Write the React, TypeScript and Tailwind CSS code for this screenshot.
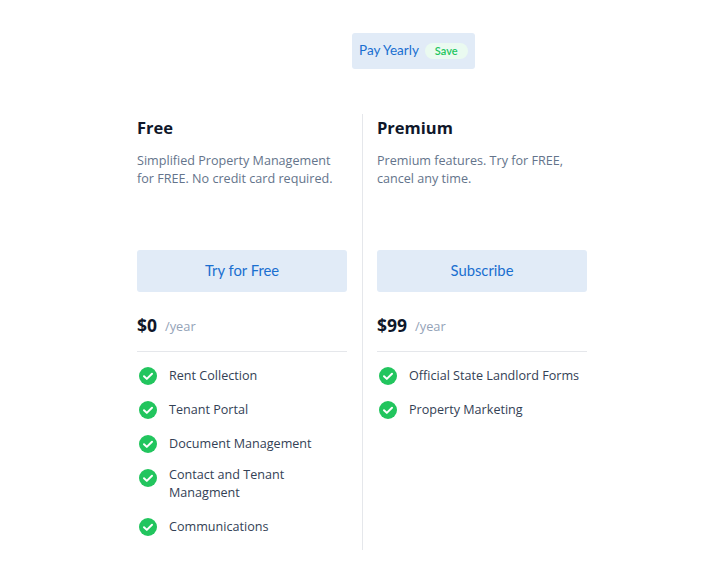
import React from 'react';

const freeFeatures = ['Rent Collection', 'Tenant Portal', 'Document Management', 'Contact and Tenant Managment', 'Communications'];
const premiumFeatures = ['Official State Landlord Forms', 'Property Marketing'];

const CheckIcon = ({ wrapped }: { wrapped: boolean }) => (
  <svg viewBox="0 0 18 18" className={wrapped ? 'mt-[3px] ml-[2px] h-[18px] w-[18px] shrink-0' : 'ml-[2px] h-[18px] w-[18px] shrink-0'} fill="none">
    <circle cx="9" cy="9" r="9" fill="#22c55e" />
    <path d="M5 9.2l2.8 2.7 5.2-5.2" stroke="#fff" strokeWidth="2" strokeLinecap="round" strokeLinejoin="round" />
  </svg>
);

const PlanColumn = ({ name, desc, cta, price, features, className }: { name: string; desc: string[]; cta: string; price: string; features: string[]; className: string }) => (
  <div className={className}>
    <h3 className="text-[16.5px] leading-[27px] font-bold text-[#0f172a]">{name}</h3>
    <p className="mt-[11px] h-[89px] text-[12.6px] leading-[18px] text-[#64748b]">
      {desc[0]}
      <br />
      {desc[1]}
    </p>
    <button className="mt-[9px] block h-[42px] w-[210px] rounded-[3px] bg-[#e1ebf7] pb-[2px] font-['Lato',sans-serif] text-[14.8px] font-normal text-[#1a6fd0]">{cta}</button>
    <div className="mt-[19px] flex items-center">
      <span className="text-[17.5px] leading-[28px] font-bold text-[#0f172a]">{price}</span>
      <span className="mt-[2px] ml-[8px] text-[12.8px] leading-[18px] font-medium text-[#94a3b8]">/year</span>
    </div>
    <div className="mt-[12px] w-[210px] border-t border-[#e5e7eb]" />
    <ul className="mt-[15px] flex w-[210px] flex-col gap-[16px]">
      {features.map((f) => {
        const wrapped = f === 'Contact and Tenant Managment';
        return (
          <li key={f} className={wrapped ? '-mt-[3px] flex items-start' : 'flex items-start'}>
            <CheckIcon wrapped={wrapped} />
            <span className="ml-[12px] text-[12.6px] leading-[18px] text-[#334155]">{f}</span>
          </li>
        );
      })}
    </ul>
  </div>
);

export default function App() {
  return (
    <div className="h-[578px] w-[702px] overflow-hidden bg-white font-['Open_Sans',sans-serif]">
      <div className="flex justify-center pt-[33px] pl-[125px]">
        <div className="flex h-[36px] w-[123px] items-center rounded-[3px] bg-[#e1ebf7] pl-[7px]">
          <span className="pb-[2px] font-['Lato',sans-serif] text-[13.5px] font-normal text-[#1a6fd0]">Pay Yearly</span>
          <span className="ml-[6px] rounded-full bg-[#eafaf0] px-[10px] font-['Lato',sans-serif] text-[11px] leading-[16px] font-semibold text-[#22c55e]">Save</span>
        </div>
      </div>
      <div className="mt-[45px] flex pl-[137px]">
        <PlanColumn
          className="h-[436px] w-[226px] border-r border-[#e5e7eb]"
          name="Free"
          desc={['Simplified Property Management', 'for FREE. No credit card required.']}
          cta="Try for Free"
          price="$0"
          features={freeFeatures}
        />
        <PlanColumn
          className="ml-[14px] w-[226px]"
          name="Premium"
          desc={['Premium features. Try for FREE,', 'cancel any time.']}
          cta="Subscribe"
          price="$99"
          features={premiumFeatures}
        />
      </div>
    </div>
  );
}
